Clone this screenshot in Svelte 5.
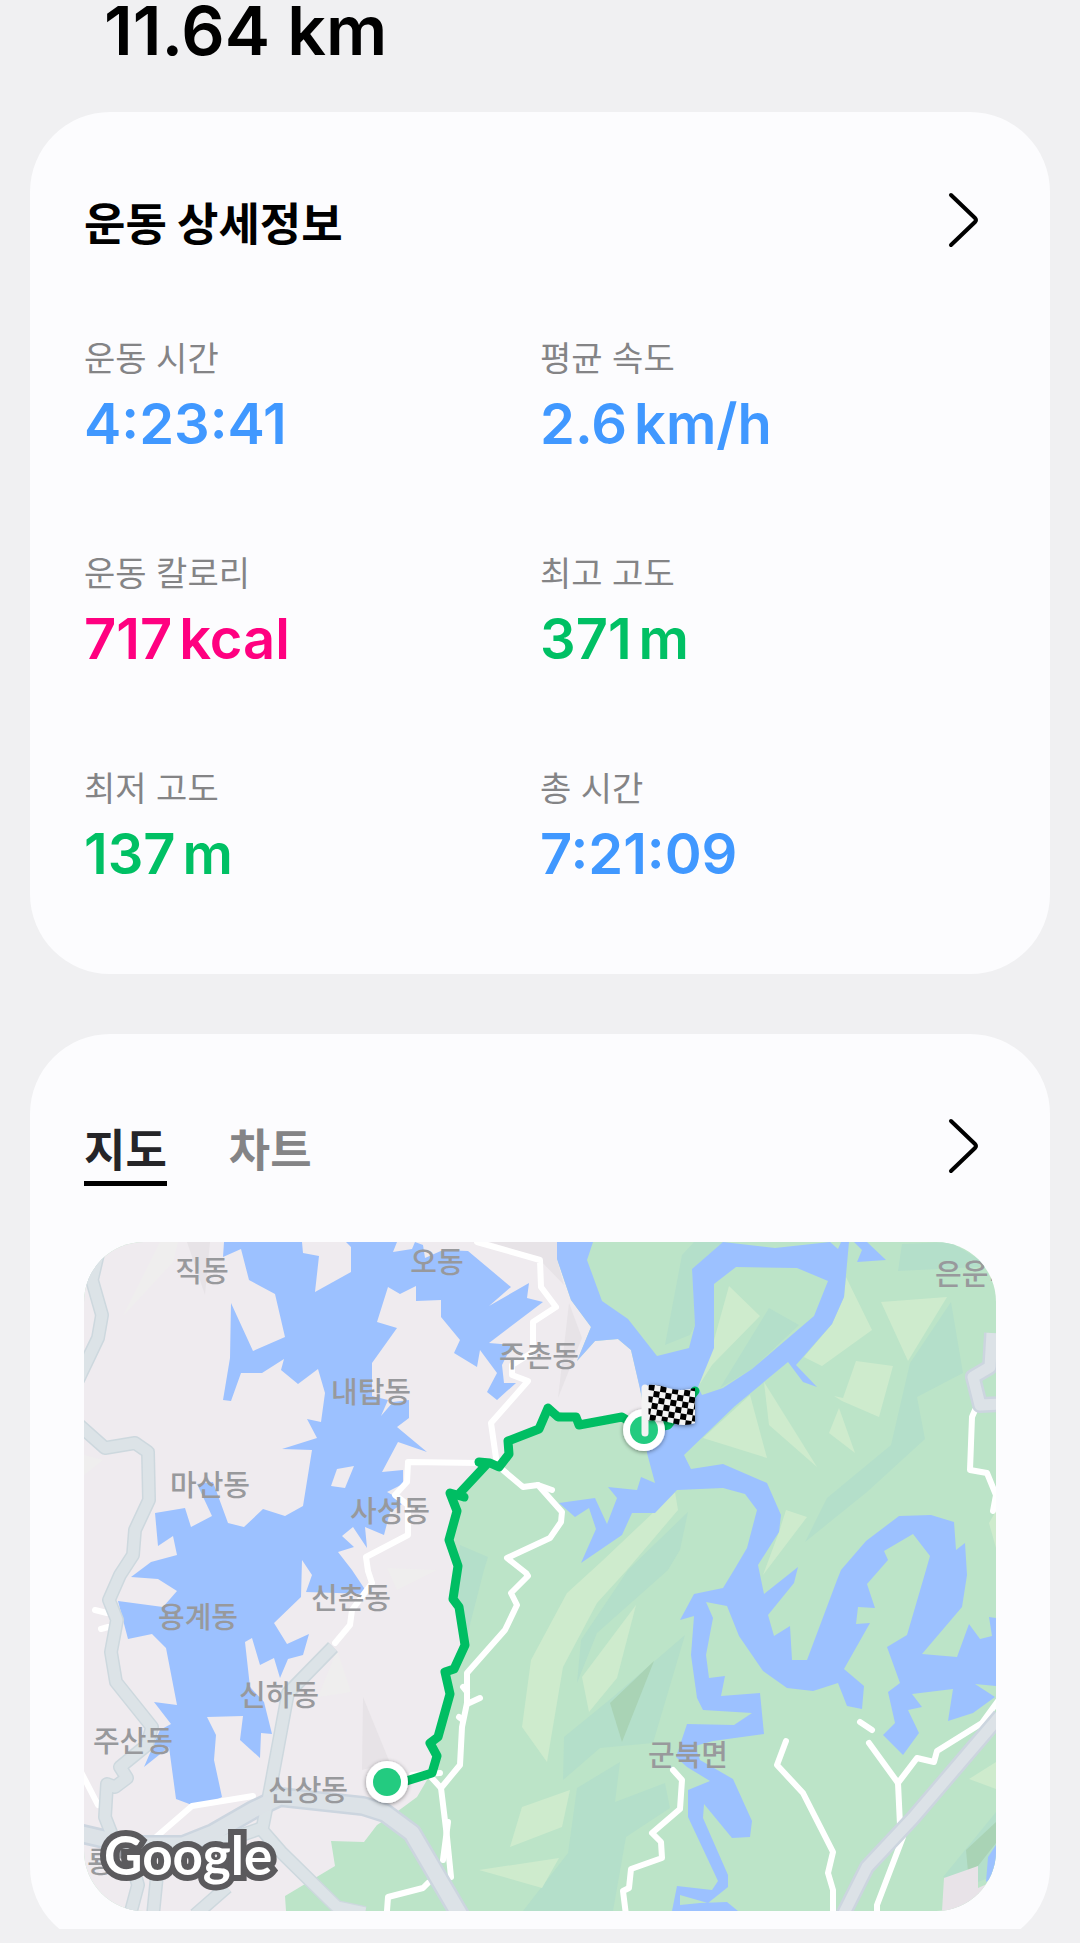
<script lang="ts">
  // ============================================================================
  // TYPES
  // ============================================================================

  interface Metric {
    label: string;
    value: string;
    unit?: string;
    tone: 'time' | 'energy' | 'height';
  }

  interface Place {
    name: string;
    x: number;
    y: number;
  }

  // ============================================================================
  // DATA
  // ============================================================================

  const metrics: Metric[] = [
    { label: '운동 시간', value: '4:23:41', tone: 'time' },
    { label: '평균 속도', value: '2.6', unit: 'km/h', tone: 'time' },
    { label: '운동 칼로리', value: '717', unit: 'kcal', tone: 'energy' },
    { label: '최고 고도', value: '371', unit: 'm', tone: 'height' },
    { label: '최저 고도', value: '137', unit: 'm', tone: 'height' },
    { label: '총 시간', value: '7:21:09', tone: 'time' }
  ];

  const tabs = ['지도', '차트'];
  let activeTab = $state('지도');

  const places: Place[] = [
    { name: '직동', x: 202, y: 1282 },
    { name: '오동', x: 437, y: 1273 },
    { name: '주촌동', x: 539, y: 1367 },
    { name: '내탑동', x: 371, y: 1403 },
    { name: '마산동', x: 210, y: 1496 },
    { name: '사성동', x: 390, y: 1522 },
    { name: '신촌동', x: 351, y: 1609 },
    { name: '용계동', x: 198, y: 1628 },
    { name: '신하동', x: 279, y: 1706 },
    { name: '주산동', x: 133, y: 1752 },
    { name: '신상동', x: 308, y: 1801 },
    { name: '룡동', x: 114, y: 1873 },
    { name: '군북면', x: 688, y: 1766 },
    { name: '은운리', x: 975, y: 1285 }
  ];

  // Terrain shading
  const lightSlopes = [
    '729,1286 760,1316 712,1365 698,1387 714,1340',
    '846,1277 872,1330 822,1366 804,1357 832,1324 844,1297',
    '881,1302 947,1297 908,1361',
    '856,1361 893,1366 879,1417 842,1401 834,1396 843,1398',
    '839,1408 855,1453 829,1433',
    '764,1382 817,1467 769,1425',
    '750,1395 767,1458 703,1438',
    '786,1510 807,1517 763,1575 779,1532',
    '675,1492 678,1510 627,1570 597,1603 563,1667 547,1762 522,1727 531,1660 567,1593 601,1562',
    '636,1605 617,1678 589,1712 582,1677',
    '570,1790 562,1827 510,1847 522,1807',
    '479,1870 559,1858 542,1888',
    '969,1779 996,1762 996,1789',
    '996,1511 989,1523 996,1548'
  ];

  const tealSlopes = [
    '769,1308 799,1325 752,1369 720,1388',
    '951,1302 963,1373 917,1397 925,1439 867,1492 805,1542 827,1498 891,1445 910,1363',
    '902,1244 950,1242 980,1260 996,1266 898,1271',
    '682,1255 694,1242 723,1242 692,1269 695,1325 690,1335 665,1345',
    '688,1512 680,1550 668,1570 597,1633 577,1683 581,1640 628,1570',
    '685,1635 653,1743 600,1748 563,1780 564,1737 613,1697',
    '620,1762 615,1802 665,1783 670,1808 626,1837 613,1911 523,1911 568,1853 577,1788',
    '460,1545 488,1557 484,1570 466,1640 452,1600',
    '996,1812 943,1877 970,1885 996,1875'
  ];

  const darkSlopes = ['654,1661 622,1742 610,1703', '996,1822 996,1843 978,1866 968,1872 966,1850'];

  const townShade = [
    '187,1242 210,1242 205,1295',
    '490,1242 557,1242 557,1259 564,1285 537,1257',
    '569,1303 582,1338 558,1398',
    '363,1697 390,1763 362,1770'
  ];

  const townLight = [
    '160,1242 178,1242 173,1262 123,1316',
    '337,1650 351,1692 318,1697',
    '387,1568 437,1570 397,1590',
    '84,1455 103,1460 84,1475'
  ];

  // Roads
  const mainRoads = [
    'M99 1250 92 1280 102 1315 98 1338 78 1380',
    'M78 1424 105 1448 135 1443 148 1452 149 1500 135 1530 133 1555 120 1575 109 1600 117 1620 111 1652 116 1682 152 1727 147 1745 120 1767 127 1778 115 1787 107 1784 105 1817 112 1835',
    'M333 1647 288 1693 270 1790 262 1830 282 1853 337 1907 365 1913',
    'M213 1845 262 1828',
    'M195 1915 227 1887',
    'M128 1850 138 1885 130 1915',
    'M158 1865 153 1915'
  ];
  const highway = 'M78 1833 130 1845 183 1845 213 1833 253 1810 280 1797 363 1806 385 1813 412 1833 460 1915';
  const eastRoads = [
    'M843 1915 867 1867 913 1818 1000 1716',
    'M992 1333 990 1367 973 1377 980 1405 1000 1404'
  ];

  const whiteRoads = [
    'M975 1410 972 1417 970 1470 987 1473 996 1495 993 1511',
    'M477 1242 540 1260 541 1287 556 1307 533 1322 533 1352 512 1365 512 1375 528 1381 491 1423 497 1465 523 1487 538 1485 562 1512 561 1522 550 1538 507 1558 526 1573 528 1576 511 1593 517 1605 505 1630 467 1673 467 1703 462 1727 460 1765 441 1788 447 1837 451 1877',
    'M538 1485 552 1490',
    'M480 1698 467 1704',
    'M463 1687 467 1692M459 1717 463 1720',
    'M441 1788 431 1777',
    'M448 1822 443 1860',
    'M412 1775 440 1773',
    'M479 1463 408 1462 407 1482 395 1495 408 1505 408 1535 366 1557 368 1571 372 1583 352 1610 350 1625 335 1643',
    'M253 1796 192 1806 155 1838',
    'M80 1770 98 1805',
    'M95 1610 107 1613M101 1629 108 1627',
    'M387 1911 388 1897 423 1888 428 1883',
    'M673 1770 682 1780 680 1809 652 1833 661 1842 662 1858 631 1869 629 1888 623 1891 626 1915',
    'M786 1741 777 1765 803 1793 833 1852 828 1873 833 1890 833 1915',
    'M860 1722 872 1730',
    'M869 1743 898 1783 900 1825',
    'M903 1837 877 1905 877 1915',
    'M898 1783 917 1758 934 1762 937 1751 982 1723 998 1701'
  ];

  const route =
    'M695 1391 668 1425 644 1430 622 1417 579 1425 576 1417 558 1417 548 1408 539 1429 508 1441 509 1454 499 1467 490 1463 479 1462 486 1465 458 1495 464 1497 450 1493 457 1511 449 1540 458 1566 453 1599 459 1607 465 1645 454 1669 445 1672 450 1694 438 1737 430 1743 437 1756 432 1773 387 1787';
</script>

{#snippet moreButton(label: string)}
  <button class="more" aria-label={label}>
    <svg viewBox="0 0 64 64" width="64" height="64" aria-hidden="true">
      <path d="M19 7 L43 30 Q45 32 43 34 L19 57" />
    </svg>
  </button>
{/snippet}

<main class="page">
  <header class="distance">11.64 km</header>

  <section class="card details">
    <div class="card-header">
      <h2>운동 상세정보</h2>
      {@render moreButton('운동 상세정보 더보기')}
    </div>

    <dl class="metrics">
      {#each metrics as metric}
        <div class="metric">
          <dt>{metric.label}</dt>
          <dd class={metric.tone}>
            <span>{metric.value}</span>{#if metric.unit}<span class="unit">{metric.unit}</span>{/if}
          </dd>
        </div>
      {/each}
    </dl>
  </section>

  <section class="card route">
    <div class="card-header">
      <div class="tabs" role="tablist">
        {#each tabs as tab}
          <button
            class="tab"
            class:active={tab === activeTab}
            role="tab"
            aria-selected={tab === activeTab}
            onclick={() => (activeTab = tab)}>{tab}</button>
        {/each}
      </div>
      {@render moreButton('지도 더보기')}
    </div>

    <svg class="map" viewBox="84 1242 912 669" role="img" aria-label="이동 경로">
      <defs>
        <pattern id="checks" width="12" height="12" patternUnits="userSpaceOnUse" patternTransform="translate(649 1384) rotate(9)">
          <rect width="12" height="12" fill="#f4f4f4" />
          <path d="M0 0h6v6H0zM6 6h6v6H6z" fill="#000" />
        </pattern>
        <filter id="shadow" x="-30%" y="-30%" width="160%" height="170%">
          <feDropShadow dx="0" dy="1" stdDeviation="2" flood-color="#000" flood-opacity="0.45" />
        </filter>
      </defs>

      <!-- Land -->
      <rect x="84" y="1242" width="912" height="669" fill="#bce4c8" />
      {#each tealSlopes as points}
        <polygon {points} fill="#b4dfca" />
      {/each}
      {#each lightSlopes as points}
        <polygon {points} fill="#ceebcd" />
      {/each}
      {#each darkSlopes as points}
        <polygon {points} fill="#a9d3b5" />
      {/each}
      <polygon points="944,1878 978,1866 978,1888 996,1880 996,1911 942,1911" fill="#e8e3e8" />
      <polygon
        points="84,1242 557,1242 557,1259 571,1300 591,1327 577,1361 595,1341 618,1339 631,1350 640,1388 645,1420 622,1418 580,1424 575,1417 548,1408 538,1430 508,1442 508,1455 498,1465 485,1462 455,1497 450,1495 456,1512 450,1542 458,1566 452,1600 460,1608 464,1645 455,1668 446,1673 450,1694 440,1735 430,1743 436,1757 433,1770 427,1780 417,1797 398,1811 377,1825 364,1842 331,1841 335,1866 285,1896 286,1911 84,1911"
        fill="#efebef"
      />
      {#each townShade as points}
        <polygon {points} fill="#e7e3e7" />
      {/each}
      {#each townLight as points}
        <polygon {points} fill="#efeeee" />
      {/each}

      <!-- Lake -->
      <polygon
        class="water"
        points="224,1242 223,1257 241,1249 249,1280 275,1294 285,1337 253,1351 231,1303 230,1358 223,1400 231,1401 241,1373 262,1373 284,1359 281,1370 298,1384 318,1369 325,1393 321,1422 307,1419 317,1438 282,1449 312,1450 303,1506 285,1516 263,1509 244,1527 228,1523 213,1482 197,1484 212,1516 191,1527 185,1508 155,1513 158,1546 173,1536 177,1555 151,1562 131,1577 158,1579 177,1591 163,1607 118,1601 128,1639 152,1634 166,1648 177,1705 154,1702 171,1724 160,1730 144,1767 169,1747 176,1799 192,1805 202,1807 222,1797 214,1760 216,1735 207,1717 243,1716 240,1740 260,1758 261,1733 272,1734 264,1702 250,1687 245,1642 252,1638 260,1665 274,1658 280,1678 288,1659 303,1655 309,1634 287,1644 274,1623 301,1597 302,1560 312,1575 306,1592 368,1594 352,1570 338,1552 354,1547 342,1536 353,1527 367,1548 365,1527 384,1535 390,1512 405,1502 387,1492 403,1484 403,1470 382,1472 398,1442 427,1452 397,1427 409,1418 409,1400 393,1402 381,1416 388,1400 372,1396 372,1363 397,1328 377,1322 388,1287 400,1294 416,1286 416,1301 441,1300 441,1317 460,1340 454,1353 477,1367 480,1350 497,1373 487,1392 497,1400 516,1383 504,1383 502,1365 512,1345 489,1343 543,1302 527,1298 529,1283 489,1306 511,1287 468,1251 443,1250 425,1258 423,1245 415,1242 412,1249 393,1252 397,1242 346,1242 351,1247 351,1272 315,1292 319,1256 303,1253 302,1242"
      />
      <polygon points="337,1469 354,1466 345,1488 331,1486" fill="#efebef" />

      <!-- River -->
      <path
        class="water"
        fill-rule="evenodd"
        d="M557 1242 593 1242 587 1260 602 1301 628 1319 657 1356 689 1348 695 1325 692 1269 723 1242 775 1248 830 1242 838 1249 841 1242 849 1242 844 1297 832 1324 796 1365 817 1387 803 1382 788 1362 735 1406 684 1455 691 1469 723 1464 767 1483 781 1515 779 1532 758 1565 764 1594 798 1567 794 1583 768 1615 774 1636 790 1626 792 1660 807 1660 837 1580 841 1570 866 1541 899 1516 931 1515 954 1522 956 1550 965 1543 967 1575 962 1607 922 1654 957 1657 969 1624 980 1639 992 1636 989 1617 996 1618 996 1686 975 1684 995 1697 973 1713 948 1721 953 1689 912 1694 922 1707 908 1710 919 1733 903 1755 883 1735 895 1723 888 1692 900 1683 887 1647 907 1635 926 1570 930 1556 913 1534 884 1551 888 1560 867 1584 875 1608 858 1607 856 1624 870 1623 844 1669 864 1686 862 1709 847 1706 838 1683 813 1691 787 1688 763 1671 739 1636 727 1606 706 1602 713 1618 706 1655 709 1678 725 1676 721 1696 760 1693 764 1734 713 1741 695 1746 700 1760 733 1779 752 1821 750 1837 732 1838 704 1804 703 1818 728 1875 728 1887 708 1903 680 1895 680 1905 700 1903 727 1902 738 1911 672 1911 677 1886 712 1890 718 1881 688 1817 688 1790 710 1781 687 1767 676 1757 687 1724 734 1725 752 1713 703 1710 697 1698 691 1655 694 1616 680 1620 694 1594 723 1588 734 1570 747 1548 757 1510 745 1494 723 1488 677 1490 655 1513 632 1513 622 1535 581 1563 596 1529 589 1508 575 1517 559 1503 595 1498 607 1524 617 1498 608 1487 637 1490 641 1477 655 1483 647 1453 643 1402 631 1350 618 1339 595 1341 577 1361 591 1327 571 1300 557 1259Z
           M714 1284 736 1267 797 1268 828 1281 814 1316 752 1369 723 1388 702 1395 698 1387 714 1348Z
           M854 1242 867 1242 886 1260 857 1262 862 1250Z
           M996 1845 988 1857 986 1882 996 1875Z"
      />

      <!-- Roads -->
      {#each whiteRoads as d}
        <path class="road white" {d} />
      {/each}
      {#each mainRoads as d}
        <path class="road main-edge" {d} />
      {/each}
      <path class="road highway-edge" d={highway} />
      {#each mainRoads as d}
        <path class="road main" {d} />
      {/each}
      <path class="road highway" d={highway} />
      {#each eastRoads as d}
        <path class="road east-edge" {d} />
        <path class="road east" {d} />
      {/each}

      {#each places as place}
        <text class="place" x={place.x} y={place.y}>{place.name}</text>
      {/each}

      <!-- Route -->
      <path class="track" d={route} />
      <g filter="url(#shadow)">
        <circle cx="387" cy="1782" r="21" fill="#fff" />
        <circle cx="644" cy="1430" r="21" fill="#fff" />
      </g>
      <circle cx="387" cy="1782" r="14" fill="#23cb80" />
      <circle cx="644" cy="1430" r="14" fill="#23cb80" />
      <g filter="url(#shadow)">
        <path d="M648 1385Q656 1384 668 1388T695 1388V1423Q684 1427 672 1423T648 1421Z" fill="url(#checks)" />
      </g>
      <path d="M645 1388V1433" stroke="#f3f3f3" stroke-width="7" stroke-linecap="round" />

      <text class="google" x="104" y="1875">Google</text>
    </svg>
  </section>
</main>

<style>
  :global(body) {
    margin: 0;
    background: #f0f0f2;
  }

  .page {
    overflow: hidden;
    padding: 0 30px;
    margin-bottom: 14px;
    font-family: Inter, 'Noto Sans CJK KR', sans-serif;
    color: #000;
  }

  .distance {
    padding: 0 74px;
    height: 112px;
    font-size: 68px;
    line-height: 60px;
    font-weight: 600;
  }

  .card {
    padding: 76px 54px 89px;
    background: #fcfcfe;
    border-radius: 80px;
  }

  .route {
    margin-top: 60px;
    margin-bottom: -18px;
    padding: 80px 54px 36px;
  }

  .card-header {
    display: flex;
    justify-content: space-between;
    align-items: flex-start;
  }

  h2 {
    margin: 0;
    font-family: 'Noto Sans CJK KR', sans-serif;
    font-size: 45px;
    line-height: 68px;
    font-weight: 600;
  }

  button {
    padding: 0;
    border: none;
    background: none;
    font-family: 'Noto Sans CJK KR', sans-serif;
    cursor: pointer;
  }

  .more {
    width: 64px;
    height: 64px;
  }

  .more svg {
    display: block;
    fill: none;
    stroke: #000;
    stroke-width: 4;
    stroke-linecap: round;
    stroke-linejoin: round;
  }

  .metrics {
    display: grid;
    grid-template-columns: 1fr 1fr;
    row-gap: 97px;
    margin: 81px 0 0;
  }

  dt {
    font-size: 34px;
    line-height: 44px;
    color: #848486;
  }

  dd {
    display: flex;
    gap: 7px;
    margin: 10px 0 0;
    font-size: 56px;
    line-height: 66px;
    font-weight: 600;
  }

  .metric {
    height: 118px;
  }

  .time {
    color: #4098ff;
  }

  .energy {
    color: #ff0080;
  }

  .height {
    color: #00c064;
  }

  .tabs {
    display: flex;
    gap: 62px;
  }

  .tab {
    height: 72px;
    border-bottom: 5px solid transparent;
    font-size: 45px;
    line-height: 67px;
    font-weight: 600;
    color: #848486;
  }

  .tab.active {
    border-color: #000;
    color: #252528;
  }

  .map {
    display: block;
    width: 100%;
    margin-top: 56px;
    border-radius: 60px;
    overflow: hidden;
  }

  .water {
    fill: #9cc1ff;
  }

  .road {
    fill: none;
    stroke-linejoin: round;
    stroke-linecap: round;
  }

  .white {
    stroke: #fff;
    stroke-width: 6;
  }

  .main-edge {
    stroke: #cdd8de;
    stroke-width: 14;
    stroke-linecap: butt;
  }

  .main {
    stroke: #dce3e7;
    stroke-width: 11;
    stroke-linecap: butt;
  }

  .highway-edge {
    stroke: #ccd5df;
    stroke-width: 20;
  }

  .highway {
    stroke: #dce2e7;
    stroke-width: 15;
  }

  .east-edge {
    stroke: #ccd5df;
    stroke-width: 16;
    stroke-linecap: butt;
  }

  .east {
    stroke: #dce2e7;
    stroke-width: 11;
    stroke-linecap: butt;
  }

  .place {
    font-family: 'Noto Sans CJK KR', sans-serif;
    font-size: 29px;
    font-weight: 500;
    text-anchor: middle;
    fill: #98999c;
  }

  .track {
    fill: none;
    stroke: #00be63;
    stroke-width: 9;
    stroke-linejoin: round;
    stroke-linecap: round;
  }

  .google {
    font-family: Lato, sans-serif;
    font-size: 53px;
    font-weight: 700;
    fill: #fff;
    stroke: #5b5a5d;
    stroke-width: 12;
    stroke-linejoin: miter;
    paint-order: stroke;
  }
</style>
